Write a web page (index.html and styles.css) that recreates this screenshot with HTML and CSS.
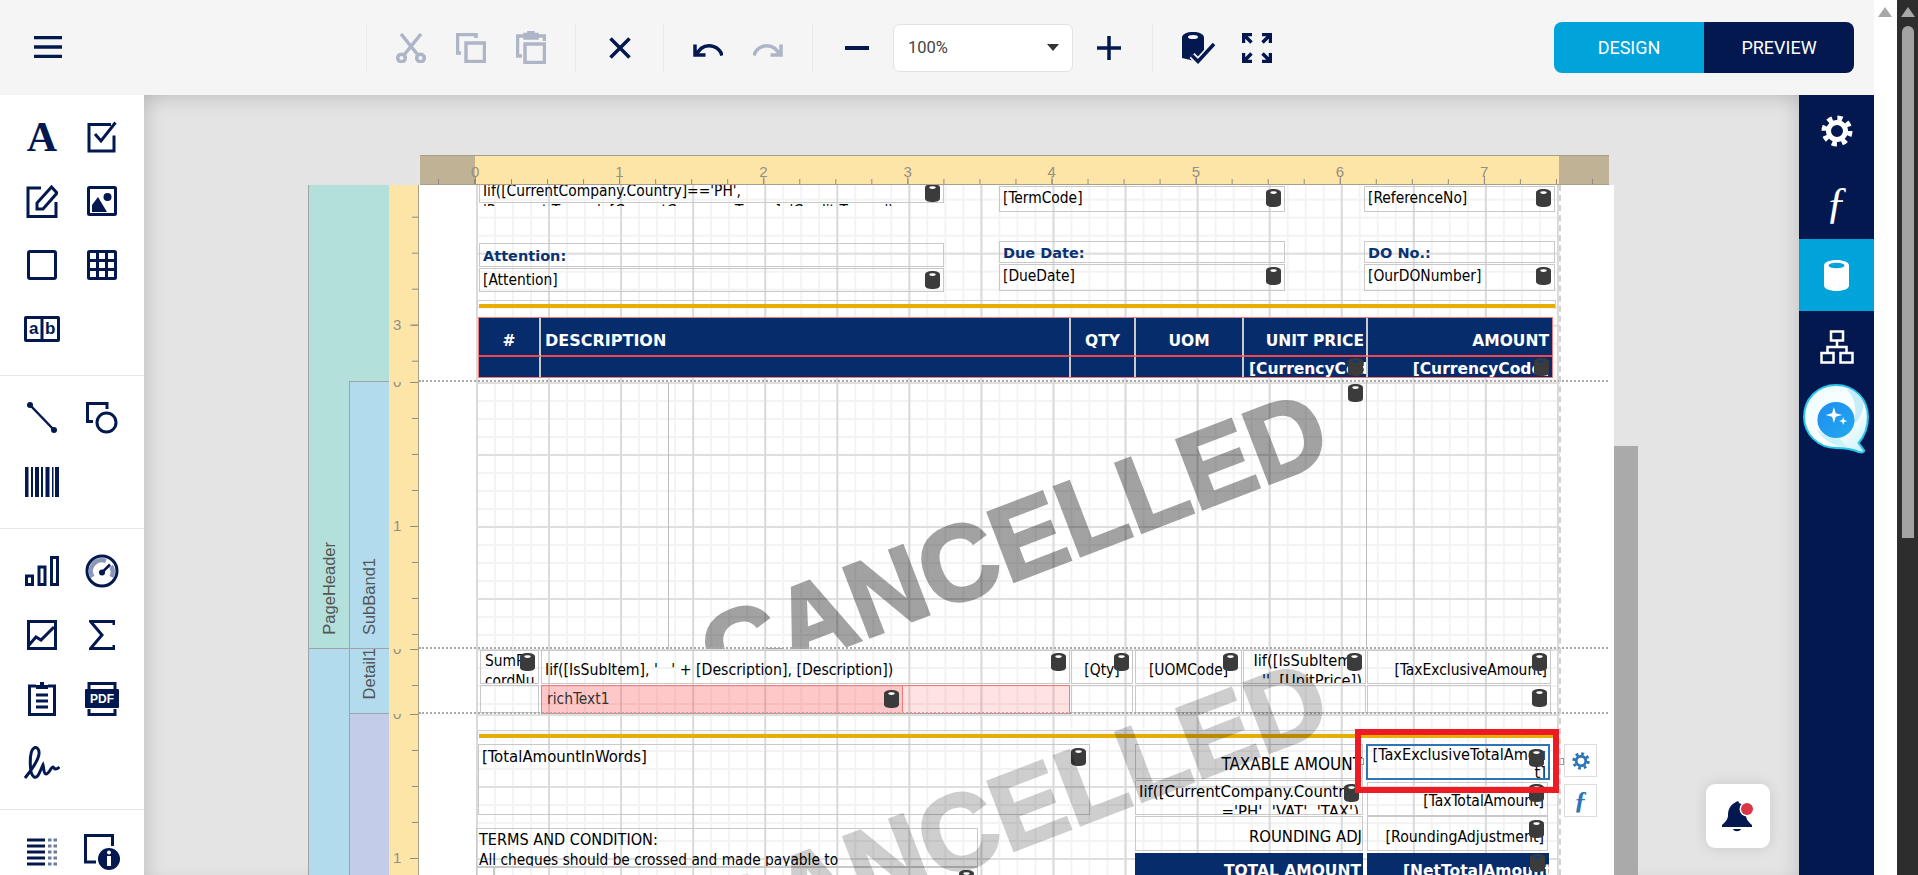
FILE: index.html
```html
<!DOCTYPE html>
<html lang="en">
<head>
<meta charset="utf-8">
<title>Report Designer</title>
<link rel="stylesheet" href="styles.css">
</head>
<body>
<svg class="defs" width="0" height="0" aria-hidden="true">
  <symbol id="db" viewBox="0 0 15 18">
    <path class="db-body" d="M0 3.6C0 1.3 3.4 0 7.5 0S15 1.3 15 3.6v10.8c0 2.300-3.400 3.600-7.500 3.600S0 16.700 0 14.400z"/>
    <ellipse class="db-slit" cx="7.500" cy="3.600" rx="3.200" ry="1.300"/>
  </symbol>
  <symbol id="gear" viewBox="0 0 32 32">
    <circle cx="16" cy="16" r="8.500" fill="none" stroke="currentColor" stroke-width="5"/>
    <circle cx="16" cy="16" r="13" fill="none" stroke="currentColor" stroke-width="5" stroke-dasharray="5.100 5.110"/>
  </symbol>
</svg>

<div class="app">
  <header class="topbar">
    <button class="tb-menu" aria-label="Menu">
      <svg width="28" height="22" viewBox="0 0 28 22"><path d="M0 1.500h28M0 11h28M0 20.500h28" class="st navy"/></svg>
    </button>
    <div class="tb-group g-clip">
      <svg width="30" height="30" viewBox="0 0 30 30" class="st muted"><circle cx="5.500" cy="25" r="3.800"/><circle cx="24.500" cy="25" r="3.800"/><path d="M8 22 25 1M22 22 5 1"/></svg>
      <svg width="30" height="30" viewBox="0 0 30 30" class="st muted"><path d="M5 20H1.500V1.500H20V5"/><rect x="10" y="10" width="18.500" height="18.500"/></svg>
      <svg width="30" height="33" viewBox="0 0 30 33" class="st muted"><path d="M6 25H1.500V5H8M22 5h6.500v5"/><rect x="9" y="13" width="19.500" height="18.500"/><path class="fill-muted" d="M9 7V3.500h4V0h4v3.500h4V7z"/></svg>
    </div>
    <div class="tb-group g-del">
      <svg width="30" height="30" viewBox="0 0 30 30" class="st navy"><path d="M5.500 5.500 24.500 24.500M24.500 5.500 5.500 24.500"/></svg>
    </div>
    <div class="tb-group g-hist">
      <svg width="30" height="30" viewBox="0 0 30 30" class="st navy"><path d="M29 22.500C27 14 16 9.500 8 15.500L3 21M2 11.500v10.500h10.500"/></svg>
      <svg width="30" height="30" viewBox="0 0 30 30" class="st muted"><path d="M1 22.500C3 14 14 9.500 22 15.500L27 21M28 11.500v10.500H17.500"/></svg>
    </div>
    <div class="tb-group g-zoom">
      <svg width="30" height="30" viewBox="0 0 30 30" class="st navy wide"><path d="M3 15h24"/></svg>
      <div class="zoom-select"><span>100%</span><i class="caret"></i></div>
      <svg width="30" height="30" viewBox="0 0 30 30" class="st navy"><path d="M3 15h24M15 3v24"/></svg>
    </div>
    <div class="tb-group g-data">
      <svg width="34" height="32" viewBox="0 0 34 32"><path class="fill-navy" d="M0 5.500C0 2 5 0 11 0s11 2 11 5.500v20c0 2-2.500 3.500-6 4.300L0 26z"/><ellipse cx="11" cy="5" rx="5" ry="2" fill="#f5f5f5"/><path d="M10 23.500l6 6L32 12" fill="none" stroke="#f5f5f5" stroke-width="7"/><path d="M10 23.500l6 6L32 12" fill="none" class="navy-line" stroke-width="3.500"/></svg>
      <svg width="30" height="30" viewBox="0 0 30 30" class="st navy"><path d="M1.500 10V1.500H10M2.500 2.500l7 7M28.500 10V1.500H20M27.500 2.500l-7 7M1.500 20v8.500H10M2.500 27.500l7-7M28.500 20v8.500H20M27.500 27.500l-7-7"/></svg>
    </div>
    <div class="mode-switch">
      <button class="mode mode-on">DESIGN</button>
      <button class="mode">PREVIEW</button>
    </div>
  </header>

  <div class="workspace">
    <nav class="tools">
      <div class="tool-group">
        <span class="tool tool-a">A</span>
        <span class="tool"><svg width="32" height="32" viewBox="0 0 32 32" class="st navy thin"><path d="M28 14.500V30H3V3.500h22"/><path d="M9 13l6 7L29.500 1.500"/></svg></span>
        <span class="tool"><svg width="32" height="34" viewBox="0 0 32 34" class="st navy thin"><path d="M15 4H2v28.500h28V18"/><path d="M11 19v6h6L31 9l-5.500-6z"/></svg></span>
        <span class="tool"><svg width="30" height="30" viewBox="0 0 30 30"><rect x="1.500" y="1.500" width="27" height="27" rx="1" fill="none" class="navy-line" stroke-width="3"/><circle cx="20.500" cy="11" r="4" class="fill-navy"/><path d="M5 26V19l6-8 9 15z" class="fill-navy"/></svg></span>
        <span class="tool"><svg width="30" height="30" viewBox="0 0 30 30" class="st navy thin"><rect x="1.500" y="1.500" width="27" height="27" rx="1.500"/></svg></span>
        <span class="tool"><svg width="30" height="30" viewBox="0 0 30 30" class="st navy thin"><rect x="1.500" y="1.500" width="27" height="27" rx="1"/><path d="M10.500 1.500v27M19.500 1.500v27M1.500 10.500h27M1.500 19.500h27"/></svg></span>
        <span class="tool"><svg width="36" height="26" viewBox="0 0 36 26"><rect x="0" y="0" width="36" height="26" rx="2" class="fill-navy"/><rect x="3" y="3" width="13.500" height="20" fill="#fff"/><rect x="19.500" y="3" width="13.500" height="20" fill="#fff"/><text x="9.700" y="18" class="ab">a</text><text x="26.200" y="18" class="ab">b</text></svg></span>
      </div>
      <div class="tool-group">
        <span class="tool"><svg width="32" height="32" viewBox="0 0 32 32"><path d="M4 3l24 25" class="navy-line" stroke-width="2.500"/><circle cx="4" cy="3" r="3" class="fill-navy"/><circle cx="28" cy="28" r="3" class="fill-navy"/></svg></span>
        <span class="tool"><svg width="32" height="32" viewBox="0 0 32 32" class="st navy thin"><path d="M7 19.500H1.500V1.500H21V7"/><circle cx="20.500" cy="20.500" r="9.500"/></svg></span>
        <span class="tool"><svg width="34" height="30" viewBox="0 0 34 30" class="fill-navy"><path d="M0 0h3.500v30H0zM6 0h2v30H6zM10 0h4v30h-4zM16 0h2v30h-2zM20.500 0h4v30h-4zM27 0h1.500v30H27zM30 0h4v30h-4z"/></svg></span>
      </div>
      <div class="tool-group">
        <span class="tool"><svg width="34" height="30" viewBox="0 0 34 30" class="st navy thin"><rect x="1.500" y="20" width="6" height="8.500"/><rect x="14" y="11" width="6" height="17.500"/><rect x="26.500" y="1.500" width="6" height="27"/></svg></span>
        <span class="tool"><svg width="34" height="34" viewBox="0 0 34 34"><circle cx="17" cy="17" r="15" fill="none" class="navy-line" stroke-width="3"/><path d="M7.500 23A11 11 0 0 1 21 7" fill="none" stroke="#8b97b6" stroke-width="4.500"/><path d="M26.500 23A11 11 0 0 0 26 12" fill="none" stroke="#8b97b6" stroke-width="4.500"/><circle cx="17" cy="18.500" r="3" class="fill-navy"/><path d="M17 18.500l8-8" class="navy-line" stroke-width="2.500"/></svg></span>
        <span class="tool"><svg width="30" height="30" viewBox="0 0 30 30" class="st navy thin"><rect x="1.500" y="1.500" width="27" height="27"/><path d="M2 25l7-8 5 3L27 7"/></svg></span>
        <span class="tool"><svg width="26" height="30" viewBox="0 0 26 30" class="st navy thin"><path d="M25 5V1.500H1.500L13 15 1.500 28.500H25V25"/></svg></span>
        <span class="tool"><svg width="28" height="34" viewBox="0 0 28 34"><path d="M8 4H1.500v28.500h25V4H20" fill="none" class="navy-line" stroke-width="3"/><path d="M8 7V3h4V0h4v3h4v4z" class="fill-navy"/><path d="M8 13h12M8 19h12M8 25h12" class="navy-line" stroke-width="3"/></svg></span>
        <span class="tool"><svg width="34" height="34" viewBox="0 0 34 34"><path d="M4 7V1.500h26V7M4 27v5.500h26V27" fill="none" class="navy-line" stroke-width="3"/><rect x="0" y="7" width="34" height="19" rx="1" class="fill-navy"/><text x="17" y="21" class="pdf">PDF</text></svg></span>
        <span class="tool"><svg width="36" height="34" viewBox="0 0 36 34" class="st navy thin"><path d="M1 32C5 27 14 16 15 8 15.500 3 12.500 0.500 10 2 5 5 5 28 10 31c4 2 6-6 9-12 1 3 .5 9 3 9 3 0 5-7 7-7 1 0 1 2 2.500 2 1.500 0 3-1 4-2"/></svg></span>
      </div>
      <div class="tool-group">
        <span class="tool"><svg width="30" height="28" viewBox="0 0 30 28"><path d="M0 2h18M0 8h18M0 14h18M0 20h18M0 26h18" class="navy-line" stroke-width="3"/><path d="M21 2h9M21 8h9M21 14h9M21 20h9M21 26h9" stroke="#6d7a9c" stroke-width="3" stroke-dasharray="3.500 2"/></svg></span>
        <span class="tool"><svg width="36" height="36" viewBox="0 0 36 36"><path d="M12 28H1.500V1.500H28.500V12" fill="none" class="navy-line" stroke-width="3"/><circle cx="25" cy="25" r="11" class="fill-navy"/><circle cx="25" cy="18.500" r="2" fill="#fff"/><rect x="23" y="22" width="4" height="10" fill="#fff"/></svg></span>
      </div>
    </nav>

    <main class="stage-area">
      <div class="designer">
        <div class="hruler">
          <i class="hr-cap hr-cap-l"></i>
          <div class="hr-scale"><span>0</span><span>1</span><span>2</span><span>3</span><span>4</span><span>5</span><span>6</span><span>7</span></div>
          <i class="hr-cap hr-cap-r"></i>
        </div>
        <div class="stage">
          <div class="bands">
            <div class="band band-page"><span>PageHeader</span></div>
            <div class="band band-page-top"></div>
            <div class="band band-sub"><span>SubBand1</span></div>
            <div class="band band-detail-outer"></div>
            <div class="band band-detail"><span>Detail1</span></div>
            <div class="band band-footer"></div>
          </div>
          <div class="vruler">
            <div class="vseg vseg-1"><span class="vn vn-3">3</span></div>
            <div class="vseg vseg-2"><span class="vn vn-0">0</span><span class="vn vn-1">1</span></div>
            <div class="vseg vseg-3"><span class="vn vn-0">0</span></div>
            <div class="vseg vseg-4"><span class="vn vn-0">0</span><span class="vn vn-1">1</span></div>
          </div>
          <div class="canvas">
            <section class="sec sec-1">
              <div class="grid"></div>
              <div class="ctl c-iif"><div class="clip">Iif([CurrentCompany.Country]=='PH',<br>'Payment Terms:', [CurrentCompany.Terms], 'Credit Terms:')</div><svg class="db"><use href="#db"/></svg></div>
              <div class="ctl c-term">[TermCode]<svg class="db"><use href="#db"/></svg></div>
              <div class="ctl c-due-l lbl">Due Date:</div>
              <div class="ctl c-due-v">[DueDate]<svg class="db"><use href="#db"/></svg></div>
              <div class="ctl c-ref">[ReferenceNo]<svg class="db"><use href="#db"/></svg></div>
              <div class="ctl c-do-l lbl">DO No.:</div>
              <div class="ctl c-do-v">[OurDONumber]<svg class="db"><use href="#db"/></svg></div>
              <div class="ctl c-att-l lbl">Attention:</div>
              <div class="ctl c-att-v">[Attention]<svg class="db"><use href="#db"/></svg></div>
              <div class="rule rule-1"></div>
              <div class="thead">
                <div class="th th-c">#</div>
                <div class="th th-wide">DESCRIPTION</div>
                <div class="th th-c">QTY</div>
                <div class="th th-c">UOM</div>
                <div class="th th-r">UNIT PRICE</div>
                <div class="th th-r th-last">AMOUNT</div>
                <div class="td"></div>
                <div class="td"></div>
                <div class="td"></div>
                <div class="td"></div>
                <div class="td">[CurrencyCode]<svg class="db db-navy"><use href="#db"/></svg></div>
                <div class="td td-r th-last">[CurrencyCode]<svg class="db db-navy"><use href="#db"/></svg></div>
              </div>
            </section>
            <section class="sec sec-2">
              <div class="grid"></div>
              <div class="ctl c-lone"><svg class="db"><use href="#db"/></svg></div>
              <div class="watermark wm-1">CANCELLED</div>
            </section>
            <section class="sec sec-3">
              <div class="grid"></div>
              <div class="ctl c-sum">SumRe<br>cordNu<svg class="db"><use href="#db"/></svg></div>
              <div class="ctl c-desc mid">Iif([IsSubItem], '&nbsp;&nbsp;&nbsp;' + [Description], [Description])<svg class="db"><use href="#db"/></svg></div>
              <div class="ctl c-qty mid ctr">[Qty]<svg class="db"><use href="#db"/></svg></div>
              <div class="ctl c-uom mid ctr">[UOMCode]<svg class="db"><use href="#db"/></svg></div>
              <div class="ctl c-price rgt">Iif([IsSubItem],<br>'', [UnitPrice])<svg class="db"><use href="#db"/></svg></div>
              <div class="ctl c-amt mid rgt">[TaxExclusiveAmount]<svg class="db"><use href="#db"/></svg></div>
              <div class="ctl c-sum2"></div>
              <div class="c-rich"><div class="c-rich-in">richText1<svg class="db"><use href="#db"/></svg></div></div>
              <div class="ctl c-qty2"></div>
              <div class="ctl c-uom2"></div>
              <div class="ctl c-price2"></div>
              <div class="ctl c-amt2"><svg class="db"><use href="#db"/></svg></div>
            </section>
            <section class="sec sec-4">
              <div class="grid"></div>
              <div class="rule rule-2"></div>
              <div class="ctl c-words">[TotalAmountInWords]<svg class="db"><use href="#db"/></svg></div>
              <div class="ctl c-terms"><span class="terms-head">TERMS AND CONDITION:</span><br>All cheques should be crossed and made payable to</div>
              <div class="ctl c-bank0"></div>
              <div class="ctl c-bank">[CurrentCompany.CompanyName]<svg class="db"><use href="#db"/></svg></div>
              <div class="ctl c-taxable mid rgt">TAXABLE AMOUNT</div>
              <div class="ctl c-country rgt">Iif([CurrentCompany.Country]<br>='PH', 'VAT', 'TAX')<svg class="db"><use href="#db"/></svg></div>
              <div class="ctl c-round mid rgt">ROUNDING ADJ</div>
              <div class="ctl c-total">TOTAL AMOUNT</div>
              <div class="ctl c-sel rgt">[TaxExclusiveTotalAmou<br>t]<svg class="db"><use href="#db"/></svg></div>
              <div class="ctl c-taxtotal mid rgt">[TaxTotalAmount]<svg class="db"><use href="#db"/></svg></div>
              <div class="ctl c-roundadj mid rgt">[RoundingAdjustment]<svg class="db"><use href="#db"/></svg></div>
              <div class="ctl c-net">[NetTotalAmount]<svg class="db db-navy"><use href="#db"/></svg></div>
              <i class="handle handle-l"></i>
              <i class="handle handle-r"></i>
              <div class="mark"></div>
              <button class="float-btn fb-gear" aria-label="Settings"><svg width="18" height="18"><use href="#gear"/></svg></button>
              <button class="float-btn fb-f">ƒ</button>
            </section>
            <div class="wm-clip"><div class="watermark wm-2">CANCELLED</div></div>
            <div class="margin-line"></div>
          </div>
        </div>
      </div>
      <div class="surface-thumb"></div>
      <button class="bell" aria-label="Notifications">
        <svg width="38" height="36" viewBox="0 0 38 36"><path class="fill-navy" d="M17 4c1-1 3-1 3 1 6 2 7 7 7 12 0 5 3 7 6 10v2H3v-2c3-3 6-5 6-10s2-10 8-13zM14 31h8c-1 3-7 3-8 0z"/><circle cx="28" cy="11" r="7.500" fill="#fff"/><circle cx="28" cy="11" r="6" fill="#dc3545"/></svg>
      </button>
    </main>

    <aside class="rail">
      <button class="rail-btn" aria-label="Settings"><svg width="32" height="32"><use href="#gear"/></svg></button>
      <button class="rail-btn rail-f">ƒ</button>
      <button class="rail-btn rail-on" aria-label="Data"><svg width="25" height="31" viewBox="0 0 25 31"><path fill="#fff" d="M0 5.500C0 2.300 5.500 0 12.500 0S25 2.300 25 5.500v20c0 3.200-5.500 5.500-12.500 5.500S0 28.700 0 25.500z"/><ellipse cx="12.500" cy="5.500" rx="8" ry="2.800" fill="#00a3da"/></svg></button>
      <button class="rail-btn" aria-label="Structure"><svg width="34" height="34" viewBox="0 0 34 34" fill="none" stroke="#fff" stroke-width="2.500"><rect x="11" y="1.500" width="12" height="9"/><rect x="1.500" y="23" width="12" height="9.500"/><rect x="20.500" y="23" width="12" height="9.500"/><path d="M17 10.500V17M7.500 23v-6h19v6"/></svg></button>
      <svg class="rail-logo" width="68" height="70" viewBox="0 0 66 70" preserveAspectRatio="none">
        <defs>
          <linearGradient id="qb" x1="0" y1="0" x2="1" y2="1"><stop offset="0" stop-color="#eafcff"/><stop offset=".6" stop-color="#ffffff"/><stop offset="1" stop-color="#bdf0fb"/></linearGradient>
          <linearGradient id="qc" x1="0" y1="0" x2="1" y2="1"><stop offset="0" stop-color="#1f8df0"/><stop offset="1" stop-color="#22a9ee"/></linearGradient>
        </defs>
        <path d="M32 1C14 1 1 15 1 33c0 17 14 31 31 31 6 0 16 1 22 4 4 1 6 0 5-2l-5-7c5-6 9-15 9-26C63 15 50 1 32 1z" fill="url(#qb)" stroke="#27c4ec" stroke-width="2"/>
        <path d="M42 5c8 8 12 22 6 36 8-5 13-18 9-26-3-5-8-9-15-10z" fill="#c5eefa"/>
        <path d="M13 44c4 10 14 18 30 19l-8-9c-8 1-16-3-22-10z" fill="#c9f3fb"/>
        <circle cx="32" cy="36" r="18" fill="url(#qc)"/>
        <path d="M30 23l1.800 6.200L38 31l-6.200 1.800L30 39l-1.800-6.200L22 31l6.200-1.800zM39 33l1 3 3 1-3 1-1 3-1-3-3-1 3-1z" fill="#fff"/>
      </svg>
    </aside>
  </div>
</div>

<div class="inner-scroll"><i class="arrow"></i></div>
<div class="outer-scroll"><i class="arrow"></i><i class="thumb"></i></div>
</body>
</html>
```

FILE: styles.css
```css
* { box-sizing: border-box; }
html, body { margin: 0; height: 875px; overflow: hidden; }
body { display: flex; width: 1918px; font-family: "Roboto", "Liberation Sans", sans-serif; background: #fff; }
button { border: 0; padding: 0; background: none; font: inherit; }
.defs { position: absolute; }

.st { fill: none; stroke-width: 3.500; }
.st.thin { stroke-width: 3; }
.st.wide { stroke-width: 4; }
.st path, .st rect, .st circle { stroke: inherit; }
.navy { stroke: #02184f; }
.muted { stroke: #adb5c7; }
.navy-line { stroke: #02184f; }
.fill-navy { fill: #02184f; stroke: none; }
.fill-muted { fill: #adb5c7; stroke: none; }
path.navy { stroke-width: 3.500; fill: none; }

.app { width: 1874px; height: 875px; display: flex; flex-direction: column; flex: none; }

/* top bar */
.topbar { height: 95px; flex: none; background: #f5f5f5; display: flex; align-items: center; padding: 0 20px 0 34px; position: relative; z-index: 3; }
.tb-menu { width: 28px; height: 22px; margin-right: 304px; margin-top: -1px; display: flex; }
.tb-group { display: flex; align-items: center; height: 48px; border-left: 1px solid #e9e9e9; padding: 0 28px 0 29px; }
.g-clip { gap: 30px; padding-right: 29px; }
.g-hist { gap: 30px; padding-right: 29px; }
.g-zoom { gap: 21px; padding-left: 29px; }
.g-data { gap: 26px; }
.zoom-select { width: 180px; height: 48px; background: #fff; border: 1px solid #e2e2e2; border-radius: 7px; display: flex; align-items: center; justify-content: space-between; padding: 0 13px 0 14px; font-size: 16.500px; color: #444; }
.caret { width: 0; height: 0; border: 6.500px solid transparent; border-top: 7px solid #333; border-bottom: 0; }
.mode-switch { margin-left: auto; display: flex; width: 300px; height: 51px; border-radius: 8px; overflow: hidden; }
.mode { flex: 1; background: #02184f; color: #fff; font-size: 18px; }
.mode-on { background: #00a3da; }

/* work area */
.workspace { flex: 1; display: flex; min-height: 0; }
.tools { width: 144px; flex: none; background: #fff; position: relative; z-index: 2; }
.tool-group { display: grid; grid-template-columns: 60px 60px; grid-auto-rows: 64px; padding: 10px 12px 14px; border-bottom: 1px solid #e8e8e8; }
.tool { display: flex; align-items: center; justify-content: center; }
.tool-a { font: bold 42px "Liberation Serif", serif; color: #02184f; }
.ab { font: bold 17px "Liberation Sans", sans-serif; fill: #02184f; text-anchor: middle; }
.pdf { font: bold 12px "Liberation Sans", sans-serif; fill: #fff; text-anchor: middle; }

.stage-area { flex: 1; min-width: 0; position: relative; overflow: hidden; background: #e4e4e4; padding: 60px 0 0 164px;
  box-shadow: inset 0 16px 18px -10px rgba(0,0,0,.11), inset 16px 0 18px -10px rgba(0,0,0,.11), inset -16px 0 18px -10px rgba(0,0,0,.09); }
.designer { width: 1306px; }

.hruler { margin-left: 112px; width: 1189px; height: 30px; display: flex; border-top: 1px solid #a89f88; border-bottom: 1px solid #a89f88; font: 15px "Liberation Sans", sans-serif; color: #938f86; }
.hr-cap { flex: none; background-color: #bfb295; background-image: linear-gradient(to right, #8f8b80 1px, transparent 1px); background-size: 36px 5px; background-repeat: repeat-x; }
.hr-cap-l { width: 55px; background-position: 18px 100%; }
.hr-cap-r { width: 50px; background-position: 33px 100%; }
.hr-scale { flex: none; width: 1084px; display: flex; padding: 4px 0 0; background-color: #fde5a8;
  background-image: linear-gradient(to right, #8f8b80 1px, transparent 1px), linear-gradient(to right, #8f8b80 1px, transparent 1px);
  background-size: 36.040px 5px, 144.150px 8px;
  background-position: 0 100%, 0 100%;
  background-repeat: repeat-x; }
.hr-scale span { width: 144.150px; flex: none; line-height: 24px; text-indent: -4px; }

.stage { display: flex; height: 690px; }
.bands { width: 81px; flex: none; display: grid; grid-template-columns: 40px 41px; grid-template-rows: 197px 267px 65px 1fr; border-left: 1px solid #a3a3a3; }
.band { display: flex; align-items: flex-end; justify-content: center; font: 16.500px "Liberation Sans", sans-serif; color: #555; border-right: 1px solid #a3a3a3; }
.band span { writing-mode: vertical-rl; transform: rotate(180deg); line-height: 1; margin-bottom: 13px; }
.band-page { grid-column: 1; grid-row: 1 / 3; background: #b3e0da; border-bottom: 1px solid #a3a3a3; border-right: 0; }
.band-page-top { grid-column: 2; grid-row: 1; background: #b3e0da; border-bottom: 1px solid #a3a3a3; }
.band-sub { grid-column: 2; grid-row: 2; background: #b2dcee; border-bottom: 1px solid #a3a3a3; border-left: 1px solid #a3a3a3; }
.band-detail-outer { grid-column: 1; grid-row: 3 / 5; background: #b2dcee; border-right: 0; }
.band-detail { grid-column: 2; grid-row: 3; background: #b2dcee; border-bottom: 1px solid #a3a3a3; border-left: 1px solid #a3a3a3; }
.band-detail span { margin-bottom: 14px; }
.band-footer { grid-column: 2; grid-row: 4; background: #c3cce8; border-left: 1px solid #a3a3a3; }

.vruler { width: 30px; flex: none; display: grid; grid-template-rows: 197px 267px 65px 1fr; border-right: 1px solid #a89f88; font: 15px "Liberation Sans", sans-serif; color: #938f86; }
.vseg { position: relative; overflow: hidden; background-color: #fde5a8;
  background-image: linear-gradient(#8f8b80 1px, transparent 1px), linear-gradient(#8f8b80 1px, transparent 1px);
  background-size: 6px 36px, 8px 144px;
  background-position: right 0 top 0, right 0 top 0;
  background-repeat: repeat-y; }
.vseg-1 { background-position: right 0 top 31.700px, right 0 top 139.700px; }
.vn { position: absolute; left: 4px; line-height: 18px; }
.vn-0 { top: -9px; }
.vn-1 { top: 135px; }
.vn-3 { top: 131px; }

.canvas { width: 1195px; flex: none; position: relative; overflow: hidden; background: #fff; display: flex; flex-direction: column; font: 15.400px/20px "DejaVu Sans Condensed", "DejaVu Sans", sans-serif; color: #000; }
.sec { position: relative; flex: none; }
.sec::after { content: ""; position: absolute; left: 0; right: 6px; bottom: 0; border-bottom: 2px dotted #aaa; }
.sec-1 { height: 197px; overflow: hidden; }
.sec-2 { height: 267px; overflow: hidden; }
.sec-3 { height: 65px; overflow: hidden; }
.sec-4 { flex: 1; overflow: hidden; }
.sec-4::after { display: none; }
.grid { position: absolute; left: 57px; top: 0; bottom: 0; width: 1084px;
  background-image:
    linear-gradient(to right, #dadada 2px, transparent 2px),
    linear-gradient(to bottom, #dfdfdf 2px, transparent 2px),
    linear-gradient(to right, #f3f3f3 2px, transparent 2px),
    linear-gradient(to bottom, #f3f3f3 2px, transparent 2px);
  background-size: 72.070px 72px, 72.070px 72px, 18.020px 18px, 18.020px 18px; }
.sec-1 .grid { background-position: 0 0, 0 67.700px, 0 0, 0 13.700px; }

.ctl { position: absolute; border: 1.500px solid #c9c9c9; padding: 1px 3px 0; white-space: nowrap; overflow: hidden; }
.mid { padding-top: 9px; }
.ctr { text-align: center; }
.rgt { text-align: right; }
.lbl { font: bold 14.500px/20px "DejaVu Sans", sans-serif; color: #0b3272; }
.db { position: absolute; right: 3px; top: 2px; width: 15px; height: 18px; }
.db-body { fill: #3b3b3b; }
.db-slit { fill: var(--slit, #fff); }
.db-navy { --slit: #0b3b80; }

.c-iif { left: 60px; top: -4px; width: 465px; height: 22px; overflow: visible; border-top: 0; padding-top: 0; }
.clip { height: 25px; overflow: hidden; }
.c-iif .db { top: 3px; }
.c-term { left: 580px; top: 1px; width: 286px; height: 26px; }
.c-due-l { left: 580px; top: 56px; width: 286px; height: 22px; }
.c-due-v { left: 580px; top: 79px; width: 286px; height: 27px; }
.c-ref { left: 945px; top: 1px; width: 191px; height: 26px; }
.c-do-l { left: 945px; top: 56px; width: 191px; height: 22px; }
.c-do-v { left: 945px; top: 79px; width: 191px; height: 27px; }
.c-att-l { left: 60px; top: 58px; width: 465px; height: 24px; line-height: 22px; }
.c-att-v { left: 60px; top: 83px; width: 465px; height: 24px; }

.rule { position: absolute; left: 58px; width: 1079px; height: 9px; border: 1px solid #cfcfcf; border-bottom: 0; }
.rule::after { content: ""; position: absolute; left: 1px; right: 0; top: 3px; height: 4px; background: #e5ae00; }
.rule-1 { top: 115px; }
.rule-2 { top: 16px; }

.thead { position: absolute; left: 59px; top: 132px; width: 1075px; height: 61px; border: 1px solid #f07a7a; display: grid; grid-template-columns: 62px 530px 65px 108px 124px 1fr; grid-template-rows: 39px 1fr; background: #072c6c; color: #fff; font: bold 15.500px/20px "DejaVu Sans", sans-serif; }
.th, .td { border-right: 2px solid #c9c9c9; padding: 13px 4px 0; white-space: nowrap; overflow: hidden; position: relative; min-width: 0; }
.th { border-bottom: 2px solid #f0474f; }
.td { padding: 2px 5px 0; }
.th-wide { font-size: 16px; }
.th-c { text-align: center; }
.th-r { text-align: right; padding-right: 2px; }
.th-last { border-right: 0; padding-right: 3px; }
.td-r { text-align: right; }
.thead .db { top: 1px; }

.c-lone { left: 249px; top: -2px; width: 699px; height: 272px; border: 0; border-left: 1px solid #bdbdbd; border-right: 1px solid #bdbdbd; }
.c-lone .db { top: 4px; }

.c-sum { left: 61px; top: 1px; width: 59px; height: 34px; padding: 0 4px; }
.c-desc { left: 122px; top: 1px; width: 529px; height: 34px; font-size: 15.700px; }
.c-qty { left: 652px; top: 1px; width: 62px; height: 34px; padding: 9px 0 0; }
.c-uom { left: 716px; top: 1px; width: 107px; height: 34px; padding: 9px 0 0; }
.c-price { left: 824px; top: 1px; width: 123px; height: 34px; padding-top: 0; font-size: 16.300px; }
.c-amt { left: 948px; top: 1px; width: 184px; height: 34px; }
.c-sum2 { left: 61px; top: 36px; width: 59px; height: 28px; }
.c-qty2 { left: 652px; top: 36px; width: 62px; height: 28px; }
.c-uom2 { left: 716px; top: 36px; width: 107px; height: 28px; }
.c-price2 { left: 824px; top: 36px; width: 123px; height: 28px; }
.c-amt2 { left: 948px; top: 36px; width: 184px; height: 28px; }
.c-amt2 .db { top: 3px; }
.c-rich { position: absolute; left: 122px; top: 36px; width: 529px; height: 29px; background: rgba(255, 70, 70, .15); border: 1px solid #ee7a7a; }
.c-rich-in { position: relative; width: 361px; height: 100%; background: rgba(255, 60, 60, .16); border-right: 1px solid #ee7a7a; padding: 3px 5px 0; color: #333; }
.c-rich-in .db { top: 4px; right: 3px; }

.c-words { left: 59px; top: 30px; width: 612px; height: 71px; font-size: 16.600px; padding-top: 2px; }
.c-words .db { top: 3px; }
.c-terms { left: 57px; top: 114px; width: 502px; height: 39px; padding-left: 2px; font-size: 15.300px; }
.terms-head { font-size: 16.100px; }
.c-bank0 { left: 57px; top: 153px; width: 18px; height: 20px; }
.c-bank { left: 75px; top: 153px; width: 484px; height: 20px; padding: 5px 4px 0; }
.c-taxable { left: 716px; top: 30px; width: 228px; height: 35px; padding-right: 0; font-size: 17px; }
.c-country { left: 716px; top: 66px; width: 228px; height: 35px; font-size: 16.600px; }
.c-round { left: 716px; top: 102px; width: 228px; height: 35px; padding: 10px 0 0; font-size: 16.500px; }
.c-total { left: 716px; top: 139px; width: 228px; height: 30px; border: 0; padding: 8px 2px 0; background: #072c6c; color: #fff; text-align: right; font: bold 15.500px/20px "DejaVu Sans", sans-serif; }
.c-sel { left: 947px; top: 30px; width: 184px; height: 36px; border: 2.500px solid #2f75b5; line-height: 18px; padding: 0 2px; font-size: 16.200px; }
.c-taxtotal { left: 948px; top: 68px; width: 181px; height: 34px; padding-top: 8px; font-size: 15.500px; }
.c-roundadj { left: 948px; top: 102px; width: 181px; height: 35px; padding-top: 10px; font-size: 15.700px; }
.c-net { left: 948px; top: 139px; width: 182px; height: 30px; border: 0; padding: 8px 2px 0 36px; background: #072c6c; color: #fff; font: bold 15.500px/20px "DejaVu Sans", sans-serif; }
.c-sel .db, .c-country .db, .c-taxtotal .db, .c-roundadj .db { top: 3px; }
.c-taxtotal .db { top: 1px; }
.c-sel .db { right: 4px; }
.c-net .db { top: 1px; right: 4px; }
.handle { position: absolute; width: 6px; height: 7px; border: 1px solid #999; background: #fff; top: 44px; }
.handle-l { left: 939px; }
.handle-r { left: 1139px; }
.mark { position: absolute; left: 936px; top: 15px; width: 204px; height: 64px; border: 6.500px solid #ed1c24; }
.float-btn { position: absolute; left: 1145px; width: 33px; height: 33px; background: #fff; border: 1px solid #ddd; color: #2f75b5; display: flex; align-items: center; justify-content: center; }
.fb-gear { top: 30px; }
.fb-f { top: 70px; font: italic bold 26px/1 "Liberation Serif", serif; }

.watermark { position: absolute; font: bold 107px/120px "Liberation Sans", sans-serif; white-space: nowrap; transform: rotate(-21deg); pointer-events: none; color: #000; -webkit-text-stroke: 3px #000; }
.wm-1 { left: 265px; top: 100px; opacity: .36; }
.wm-clip { position: absolute; left: 0; right: 0; top: 464px; bottom: 0; overflow: hidden; pointer-events: none; }
.wm-2 { left: 265px; top: 102px; opacity: .19; }
.margin-line { position: absolute; left: 1140px; top: 0; bottom: 0; border-left: 2px dashed #d2d2d2; }

.surface-thumb { position: absolute; left: 1470px; top: 351px; bottom: 0; width: 24px; background: #aaa; }
.bell { position: absolute; left: 1562px; top: 689px; width: 64px; height: 64px; background: #fff; border-radius: 9px; box-shadow: 0 0 14px rgba(0,0,0,.12); display: flex; align-items: center; justify-content: center; }

/* right rail */
.rail { width: 75px; flex: none; background: #02184f; color: #fff; display: flex; flex-direction: column; align-items: center; position: relative; }
.rail-btn { width: 100%; height: 72px; flex: none; display: flex; align-items: center; justify-content: center; color: #fff; }
.rail-f { font: italic 44px/1 "Liberation Serif", serif; }
.rail-on { background: #00a3da; }
.rail-logo { margin-top: 1px; }

/* scrollbars */
.inner-scroll { width: 23px; flex: none; background: #fff; position: relative; }
.arrow { position: absolute; top: 7px; left: 4px; width: 0; height: 0; border: 7px solid transparent; border-bottom: 10px solid #a8a8a8; border-top: 0; }
.outer-scroll { width: 21px; flex: none; background: #2d2d2d; position: relative; }
.outer-scroll .arrow { left: 4px; }
.thumb { position: absolute; left: 5px; top: 26px; width: 12px; height: 512px; background: #a3a3a3; border-radius: 6px 6px 0 0; }
```
